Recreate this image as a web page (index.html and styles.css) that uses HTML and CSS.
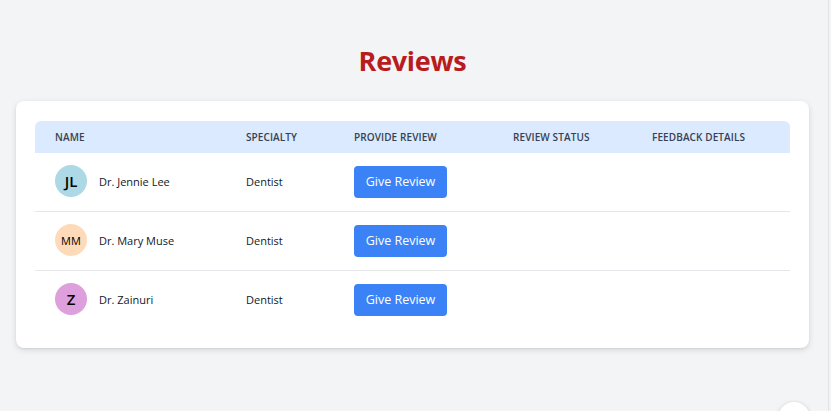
FILE: index.html
```html
<!DOCTYPE html>
<html>
<head>
<meta charset="utf-8">
<link rel="stylesheet" href="styles.css">
</head>
<body>
<main class="page">
  <h1 class="title">Reviews</h1>
  <section class="card">
    <table class="table">
      <thead>
        <tr>
          <th class="col-name">Name</th>
          <th class="col-spec">Specialty</th>
          <th class="col-prov">Provide Review</th>
          <th class="col-stat">Review Status</th>
          <th class="col-feed">Feedback Details</th>
        </tr>
      </thead>
      <tbody>
        <tr>
          <td><div class="person"><span class="avatar av-blue">JL</span><span>Dr. Jennie Lee</span></div></td>
          <td>Dentist</td>
          <td><button class="btn">Give Review</button></td>
          <td></td>
          <td></td>
        </tr>
        <tr>
          <td><div class="person"><span class="avatar av-peach small">MM</span><span>Dr. Mary Muse</span></div></td>
          <td>Dentist</td>
          <td><button class="btn">Give Review</button></td>
          <td></td>
          <td></td>
        </tr>
        <tr>
          <td><div class="person"><span class="avatar av-plum">Z</span><span>Dr. Zainuri</span></div></td>
          <td>Dentist</td>
          <td><button class="btn">Give Review</button></td>
          <td></td>
          <td></td>
        </tr>
      </tbody>
    </table>
  </section>
</main>
<div class="fab"></div>
</body>
</html>
```

FILE: styles.css
```css
html {
  margin: 0;
  padding: 0;
  background: #f3f4f6;
}
body {
  margin: 0;
  padding: 0;
  width: 829px;
  background: #f3f4f6;
  font-family: "Open Sans", "Noto Sans", sans-serif;
  color: #111827;
  height: 411px;
  overflow: hidden;
  border-right: 1px solid #e2e3e6;
  box-sizing: border-box;
}
.page {
  padding: 41px 19px 0 16px;
}
.title {
  margin: 0 0 20px 0;
  text-align: center;
  color: #b91c1c;
  font-size: 27px;
  font-weight: 700;
  line-height: 40px;
  letter-spacing: -0.3px;
}
.card {
  background: #fff;
  border-radius: 8px;
  box-shadow: 0 2px 6px rgba(0,0,0,0.12), 0 1px 2px rgba(0,0,0,0.06);
  padding: 20px 19px 19px;
}
.table {
  width: 100%;
  border-collapse: collapse;
  table-layout: fixed;
}
.table th {
  background: #dbeafe;
  height: 32px;
  padding: 0 0 0 20px;
  text-align: left;
  font-size: 10px;
  font-weight: 600;
  color: #374151;
  text-transform: uppercase;
  letter-spacing: 0.1px;
  white-space: nowrap;
}
.table th:first-child { border-top-left-radius: 6px; }
.table th:last-child { border-top-right-radius: 6px; }
.col-name { width: 171px; }
.col-spec { width: 88px; }
.col-prov { width: 139px; }
.col-stat { width: 119px; }
.table td {
  height: 56px;
  padding: 0 0 2px 20px;
  font-size: 11px;
  color: #111827;
  border-bottom: 1px solid #e5e7eb;
}
.table tbody tr:last-child td { border-bottom: none; }
.person {
  display: flex;
  align-items: center;
  gap: 12px;
}
.avatar {
  width: 32px;
  height: 32px;
  border-radius: 50%;
  display: flex;
  align-items: center;
  justify-content: center;
  font-size: 15px;
  font-weight: 600;
  color: #000;
  flex-shrink: 0;
}
.avatar.small { font-size: 11px; font-weight: 500; }
.av-blue { background: #add8e6; }
.av-peach { background: #ffdab9; }
.av-plum { background: #dda0dd; }
.btn {
  background: #3b82f6;
  color: #fff;
  border: none;
  border-radius: 4px;
  width: 93px;
  height: 32px;
  font-family: inherit;
  font-size: 12.5px;
  padding: 0;
  margin-top: 1px;
}
.fab {
  position: fixed;
  left: 778px;
  top: 402px;
  width: 32px;
  height: 32px;
  border-radius: 50%;
  background: #fff;
  box-shadow: 0 1px 4px rgba(0,0,0,0.2);
}
```
